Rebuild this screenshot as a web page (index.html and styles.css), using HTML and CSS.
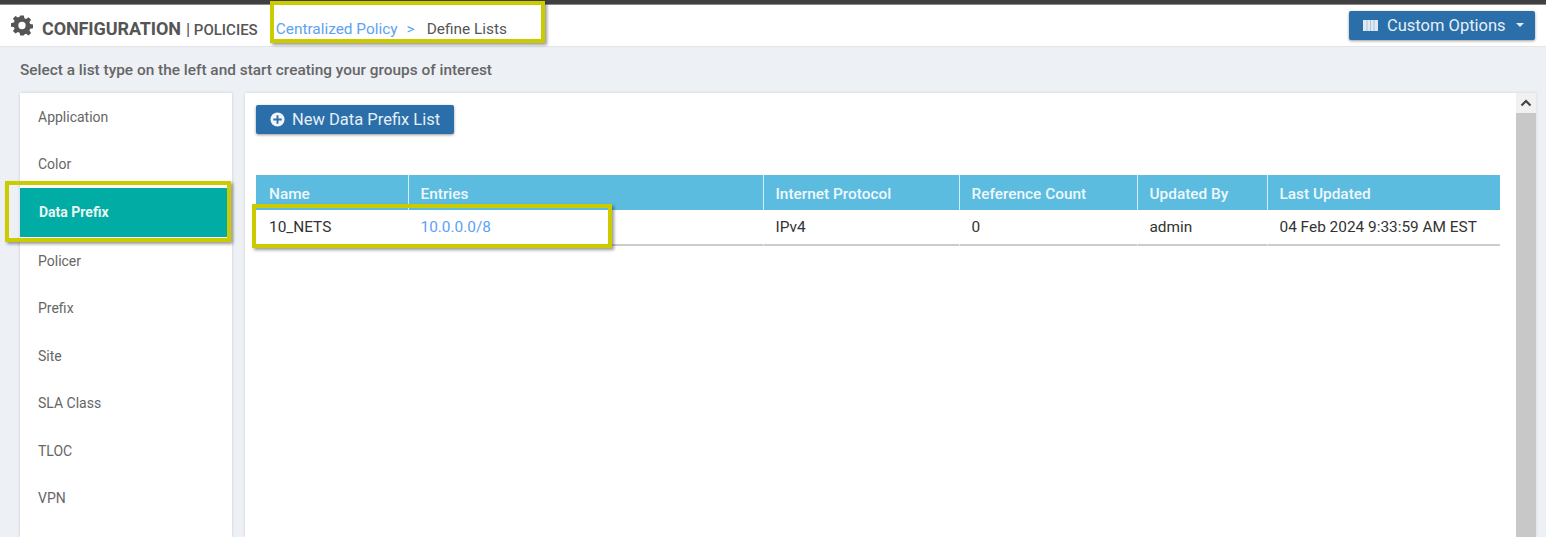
FILE: index.html
```html
<!DOCTYPE html>
<html lang="en">
<head>
<meta charset="utf-8">
<title>Configuration | Policies</title>
<link rel="stylesheet" href="styles.css">
</head>
<body>
<div class="topbar"></div>
<header class="header">
  <svg class="gear" viewBox="0 0 24 24" width="22" height="22" aria-hidden="true"><path fill="#555" fill-rule="evenodd" d="M10 1h4l.6 3.1 1.9.8 2.6-1.8 2.8 2.8-1.8 2.6.8 1.9 3.1.6v4l-3.1.6-.8 1.9 1.8 2.6-2.8 2.8-2.6-1.8-1.9.8L14 23h-4l-.6-3.1-1.9-.8-2.6 1.8-2.8-2.8 1.8-2.6-.8-1.9L0 13.5v-4l3.1-.6.8-1.9L2.1 4.4l2.8-2.8 2.6 1.8 1.9-.8zM12 8a4 4 0 1 0 0 8 4 4 0 0 0 0-8z" transform="translate(0 .5)"/></svg>
  <h1 class="title">CONFIGURATION</h1>
  <span class="section"><span class="pipe">|</span> POLICIES</span>
  <nav class="crumbs"><a class="crumb-link">Centralized Policy</a><span class="crumb-sep">&gt;</span><span class="crumb-current">Define Lists</span></nav>
  <button class="btn btn-options">
    <svg class="cols" viewBox="0 0 15 11" width="15" height="11" aria-hidden="true"><rect width="15" height="11" fill="#dfe9f3"/><path stroke="#a9c6de" stroke-width="1" d="M4 0v11M7.500 0v11M11 0v11"/></svg>
    <span>Custom Options</span><span class="caret"></span>
  </button>
</header>
<p class="hint">Select a list type on the left and start creating your groups of interest</p>
<div class="content">
  <aside class="sidebar">
    <div class="item">Application</div>
    <div class="item">Color</div>
    <div class="item active">Data Prefix</div>
    <div class="item">Policer</div>
    <div class="item">Prefix</div>
    <div class="item">Site</div>
    <div class="item">SLA Class</div>
    <div class="item">TLOC</div>
    <div class="item">VPN</div>
  </aside>
  <main class="panel">
    <div class="panel-body">
      <button class="btn btn-new">
        <svg viewBox="0 0 16 16" width="15" height="15" aria-hidden="true"><circle cx="8" cy="8" r="7.5" fill="#f2f6fa"/><path fill="#2a6fa9" d="M7 3.5h2V7h3.500v2H9v3.500H7V9H3.500V7H7z"/></svg>
        <span>New Data Prefix List</span>
      </button>
      <table class="grid">
        <colgroup><col class="c1"><col class="c2"><col class="c3"><col class="c4"><col class="c5"><col class="c6"></colgroup>
        <thead><tr><th>Name</th><th>Entries</th><th>Internet Protocol</th><th>Reference Count</th><th>Updated By</th><th>Last Updated</th></tr></thead>
        <tbody><tr><td>10_NETS</td><td><a class="entry">10.0.0.0/8</a></td><td>IPv4</td><td>0</td><td>admin</td><td>04 Feb 2024 9:33:59 AM EST</td></tr></tbody>
      </table>
    </div>
    <div class="scrollbar"><div class="scroll-up"><svg viewBox="0 0 12 8" width="12" height="8" aria-hidden="true"><path d="M1.500 6.500 6 2l4.500 4.500" fill="none" stroke="#444" stroke-width="2.200"/></svg></div><div class="scroll-track"></div></div>
  </main>
</div>
<div class="mark mark-crumbs"></div>
<div class="mark mark-item"></div>
<div class="mark mark-row"></div>
</body>
</html>
```
FILE: styles.css
```css
* { box-sizing: border-box; }
html, body { height: 100%; }
body {
  margin: 0;
  height: 537px;
  overflow: hidden;
  background: #edf0f5;
  font-family: Roboto, "Liberation Sans", sans-serif;
  color: #333;
  position: relative;
  display: flex;
  flex-direction: column;
}
.topbar { height: 5px; flex: none; background: #404040; border-bottom: 1px solid #8a8a8a; }
.header {
  height: 42px;
  flex: none;
  background: #fff;
  border-bottom: 1px solid #e3e5e8;
  display: flex;
  align-items: center;
  padding: 0 11px;
}
.gear { flex: none; margin-right: 9px; margin-top: -1px; }
.title { margin: 6px 0 0; font-size: 18px; font-weight: 700; color: #555; letter-spacing: -.1px; line-height: 1; }
.section { margin-left: 5px; font-size: 15px; font-weight: 500; color: #555; margin-top: 6px; }
.pipe { font-size: 17px; font-weight: 400; }
.crumbs { margin-left: 18px; font-size: 15.400px; display: flex; margin-top: 6px; }
.crumb-link { color: #5da2f2; }
.crumb-sep { color: #5da2f2; margin: 0 12px 0 9px; }
.crumb-current { color: #555; }
.btn {
  border: 0;
  border-radius: 2px;
  background: #2a6fa9;
  color: #e6eef6;
  font-family: inherit;
  font-size: 16.500px;
  display: flex;
  align-items: center;
  box-shadow: 0 1px 3px rgba(0,0,0,.4);
  padding: 0;
}
.btn-options { margin-left: auto; width: 186px; height: 29px; padding-left: 14px; margin-top: -1px; }
.btn-options svg { margin-right: 9px; }
.caret { margin-left: 10px; border: 4.500px solid transparent; border-top-color: #e6eef6; border-bottom-width: 0; }
.hint { margin: 15px 0 0 20px; height: 16px; font-size: 15.400px; font-weight: 500; line-height: 16px; color: #666; flex: none; }
.content { flex: 1; min-height: 0; display: flex; margin: 15px 10px 0 20px; gap: 13px; }
.sidebar { width: 212px; flex: none; background: #fff; box-shadow: 0 0 3px rgba(0,0,0,.15); }
.item { height: 47.500px; font-size: 14px; color: #666; padding-left: 18px; display: flex; align-items: center; }
.item:first-child { height: 47px; }
.item.active { background: #00aca3; color: #e8f6f5; font-weight: 700; font-size: 14px; margin-right: 5px; height: 49.500px; padding-left: 19px; }
.panel { flex: 1; min-width: 0; background: #fff; display: flex; box-shadow: 0 0 3px rgba(0,0,0,.12); }
.panel-body { flex: 1; min-width: 0; padding: 12px 16px 0 11px; }
.btn-new { width: 198px; height: 29px; padding-left: 14px; gap: 7px; }
.grid { margin-top: 41px; width: 1244px; table-layout: fixed; border-collapse: separate; border-spacing: 0; font-size: 15.400px; }
.c1 { width: 152px; } .c2 { width: 355px; } .c3 { width: 196px; } .c4 { width: 178px; } .c5 { width: 130px; } .c6 { width: 233px; }
.grid th { height: 35px; background: #5bbce0; color: #eef8fc; font-weight: 500; text-align: left; padding: 3px 0 0 11.500px; border-left: 1px solid #d3edf7; }
.grid th:first-child { border-left: 0; padding-left: 13px; }
.grid td { height: 36px; padding: 1px 0 1px 11.500px; color: #333; border-bottom: 2px solid #ccc; border-left: 1px solid #fff; white-space: nowrap; }
.grid td:first-child { border-left: 0; padding-left: 13px; }
.entry { color: #5da2f2; }
.scrollbar { width: 20px; flex: none; display: flex; flex-direction: column; }
.scroll-up { height: 20px; display: flex; align-items: center; justify-content: center; background: #f1f1f1; }
.scroll-track { flex: 1; background: #c8c8c8; }
.mark { position: absolute; border: 4px solid #cccb00; box-shadow: 2px 2px 3px rgba(0,0,0,.4); pointer-events: none; }
.mark-crumbs { left: 270px; top: 1px; width: 275px; height: 42px; }
.mark-item { left: 5px; top: 181px; width: 226px; height: 61px; }
.mark-row { left: 252px; top: 204px; width: 360px; height: 44px; }
```
